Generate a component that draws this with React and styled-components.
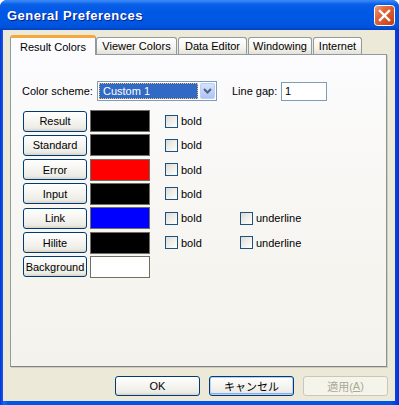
import React from "react";
import styled, { createGlobalStyle } from "styled-components";

const GlobalStyle = createGlobalStyle`
  html, body {
    margin: 0;
    padding: 0;
    background: #ffffff;
  }
  body {
    font-family: "Liberation Sans", Arial, sans-serif;
    font-size: 11px;
    color: #000;
  }
`;

const tabs = [
  { label: "Result Colors", width: 86, active: true },
  { label: "Viewer Colors", width: 81 },
  { label: "Data Editor", width: 69 },
  { label: "Windowing", width: 64 },
  { label: "Internet", width: 49 },
];

const colorRows = [
  { name: "Result", color: "#000000", bold: true },
  { name: "Standard", color: "#000000", bold: true },
  { name: "Error", color: "#ff0000", bold: true },
  { name: "Input", color: "#000000", bold: true },
  { name: "Link", color: "#0000ff", bold: true, underline: true },
  { name: "Hilite", color: "#000000", bold: true, underline: true },
  { name: "Background", color: "#ffffff" },
];

const App = () => {
  return (
    <>
      <GlobalStyle />
      <Window>
        <TitleBar>
          <Title>General Preferences</Title>
          <CloseButton aria-label="close">
            <svg width="21" height="21" viewBox="0 0 21 21">
              <defs>
                <linearGradient id="cb" x1="0" y1="0" x2="1" y2="1">
                  <stop offset="0" stopColor="#f0a07a" />
                  <stop offset="0.35" stopColor="#e2683c" />
                  <stop offset="1" stopColor="#c13b16" />
                </linearGradient>
              </defs>
              <rect x="0.5" y="0.5" width="20" height="20" rx="3" fill="url(#cb)" stroke="#ffffff" />
              <path d="M6 6 L15 15 M15 6 L6 15" stroke="#ffffff" strokeWidth="2.4" strokeLinecap="square" />
            </svg>
          </CloseButton>
        </TitleBar>
        <Body>
          <TabRow>
            {tabs.map((t) => (
              <Tab key={t.label} $active={t.active} $width={t.width}>
                {t.label}
              </Tab>
            ))}
          </TabRow>
          <Panel>
            <SchemeRow>
              <FieldLabel $width={75}>Color scheme:</FieldLabel>
              <Select>
                <SelectValue>Custom 1</SelectValue>
                <SelectArrow>
                  <svg width="9" height="6" viewBox="0 0 9 6">
                    <path d="M1 1 L4.5 4.5 L8 1" fill="none" stroke="#4d6185" strokeWidth="2" />
                  </svg>
                </SelectArrow>
              </Select>
              <FieldLabel $width={49} $gap={15}>Line gap:</FieldLabel>
              <TextBox>1</TextBox>
            </SchemeRow>
            <ColorList>
              {colorRows.map((r) => (
                <ColorRow key={r.name}>
                  <PushButton $width={64}>{r.name}</PushButton>
                  <Swatch $color={r.color} />
                  {r.bold && (
                    <CheckGroup $width={75}>
                      <CheckBox />
                      <span>bold</span>
                    </CheckGroup>
                  )}
                  {r.underline && (
                    <CheckGroup>
                      <CheckBox />
                      <span>underline</span>
                    </CheckGroup>
                  )}
                </ColorRow>
              ))}
            </ColorList>
          </Panel>
          <ButtonRow>
            <DialogButton>OK</DialogButton>
            <DialogButton $default>キャンセル</DialogButton>
            <DialogButton $disabled>
              適用(<u>A</u>)
            </DialogButton>
          </ButtonRow>
        </Body>
      </Window>
    </>
  );
};

const Window = styled.div`
  width: 399px;
  height: 405px;
  display: flex;
  flex-direction: column;
  background: linear-gradient(90deg, #0831d9 0%, #166aee 1%, #0055e5 2%, #0055e5 98%, #0831d9 100%);
  border-radius: 7px 7px 0 0;
  overflow: hidden;
  box-sizing: border-box;
`;

const TitleBar = styled.div`
  height: 30px;
  flex: none;
  display: flex;
  align-items: center;
  justify-content: space-between;
  padding: 0 4px 0 7px;
  background: linear-gradient(
    180deg,
    #3c8df5 0%,
    #2a7bf2 6%,
    #0a5fe6 14%,
    #0058e6 40%,
    #0056e0 80%,
    #0050d8 92%,
    #003fc0 100%
  );
`;

const Title = styled.div`
  font-family: "Liberation Sans", Arial, sans-serif;
  font-weight: bold;
  font-size: 13px;
  letter-spacing: 0.5px;
  color: #ffffff;
  text-shadow: 1px 1px 0 #0a1e8c;
  padding-top: 1px;
`;

const CloseButton = styled.div`
  width: 21px;
  height: 21px;
  margin-top: 1px;
  svg {
    display: block;
  }
`;

const Body = styled.div`
  flex: 1;
  margin: 0 4px 4px 3px;
  background: #ece9d8;
  padding: 5px 8px 0 7px;
  display: flex;
  flex-direction: column;
`;

const TabRow = styled.div`
  display: flex;
  align-items: flex-end;
  height: 19px;
  gap: 1px;
  position: relative;
  z-index: 1;
`;

const Tab = styled.div`
  box-sizing: border-box;
  width: ${(p) => p.$width}px;
  height: ${(p) => (p.$active ? 20 : 17)}px;
  margin-bottom: ${(p) => (p.$active ? -1 : 0)}px;
  margin-right: ${(p) => (p.$active ? -1 : 0)}px;
  border: 1px solid #919b9c;
  border-bottom: none;
  border-radius: 3px 3px 0 0;
  display: flex;
  align-items: center;
  justify-content: center;
  padding-top: ${(p) => (p.$active ? 1 : 0)}px;
  background: ${(p) =>
    p.$active ? "#fcfcfe" : "linear-gradient(180deg, #ffffff 0%, #f5f4f0 60%, #e3e1d8 100%)"};
  border-top: ${(p) => (p.$active ? "3px solid #f7a83a" : "1px solid #919b9c")};
  white-space: nowrap;
`;

const Panel = styled.div`
  box-sizing: border-box;
  height: 313px;
  border: 1px solid #919b9c;
  border-right-color: #8a9394;
  border-bottom-color: #7e8788;
  box-shadow: 1px 1px 0 #d0cdbf;
  background: linear-gradient(180deg, #fcfcfe 0%, #f7f6f2 50%, #f3f2ec 100%);
  padding: 26px 0 0 11px;
`;

const SchemeRow = styled.div`
  display: flex;
  align-items: center;
  height: 20px;
`;

const FieldLabel = styled.div`
  width: ${(p) => p.$width}px;
  margin-left: ${(p) => p.$gap || 0}px;
  white-space: nowrap;
`;

const Select = styled.div`
  box-sizing: border-box;
  width: 120px;
  height: 20px;
  border: 1px solid #7f9db9;
  background: #ffffff;
  display: flex;
  align-items: center;
  padding: 1px;
  gap: 2px;
`;

const SelectValue = styled.div`
  flex: 1;
  height: 16px;
  box-sizing: border-box;
  background: #316ac5;
  color: #ffffff;
  border: 1px dotted #f8c060;
  padding-left: 3px;
  line-height: 14px;
`;

const SelectArrow = styled.div`
  width: 15px;
  height: 16px;
  box-sizing: border-box;
  border: 1px solid #b9cdf6;
  border-radius: 2px;
  background: linear-gradient(180deg, #d6e3fd 0%, #bdd0f8 60%, #adc3f4 100%);
  display: flex;
  align-items: center;
  justify-content: center;
`;

const TextBox = styled.div`
  box-sizing: border-box;
  width: 46px;
  height: 19px;
  border: 1px solid #7f9db9;
  background: #ffffff;
  padding-left: 3px;
  line-height: 17px;
`;

const ColorList = styled.div`
  margin-top: 9px;
  display: flex;
  flex-direction: column;
  gap: 2.33px;
`;

const ColorRow = styled.div`
  display: flex;
  align-items: center;
  height: 22px;
`;

const PushButton = styled.div`
  box-sizing: border-box;
  width: ${(p) => p.$width}px;
  height: 21px;
  border: 1px solid #003c74;
  border-radius: 3px;
  background: linear-gradient(180deg, #ffffff 0%, #f6f5f1 45%, #ecebe5 85%, #d8d2c6 100%);
  display: flex;
  align-items: center;
  justify-content: center;
  white-space: nowrap;
  margin-left: 1px;
`;

const Swatch = styled.div`
  box-sizing: border-box;
  width: 60px;
  height: 22px;
  margin-left: 3px;
  border: 1px solid #716f64;
  background: ${(p) => p.$color};
`;

const CheckGroup = styled.label`
  display: flex;
  align-items: center;
  gap: 3px;
  width: ${(p) => (p.$width ? `${p.$width}px` : "auto")};
  margin-left: ${(p) => (p.$width ? 15 : 0)}px;
  white-space: nowrap;
`;

const CheckBox = styled.span`
  box-sizing: border-box;
  display: block;
  width: 13px;
  height: 13px;
  border: 1px solid #1c5180;
  background: linear-gradient(135deg, #dcdcd7 0%, #efeee9 50%, #ffffff 100%);
`;

const ButtonRow = styled.div`
  display: flex;
  justify-content: flex-end;
  gap: 9px;
  margin-top: 9px;
  margin-right: -1px;
`;

const DialogButton = styled.div`
  box-sizing: border-box;
  width: 85px;
  height: 20px;
  border: 1px solid ${(p) => (p.$disabled ? "#c9c7ba" : "#003c74")};
  border-radius: 3px;
  background: ${(p) =>
    p.$disabled
      ? "#f5f4ea"
      : "linear-gradient(180deg, #ffffff 0%, #f6f5f1 45%, #ecebe5 85%, #d8d2c6 100%)"};
  box-shadow: ${(p) =>
    p.$default ? "inset 0 0 0 1px #b8d0f8, inset 0 -1px 0 1px #89adf0" : "none"};
  color: ${(p) => (p.$disabled ? "#aca899" : "#000000")};
  font-family: "Liberation Sans", "Noto Sans CJK JP", sans-serif;
  display: flex;
  align-items: center;
  justify-content: center;
  white-space: nowrap;
  u {
    text-decoration: underline;
  }
`;

export default App;
